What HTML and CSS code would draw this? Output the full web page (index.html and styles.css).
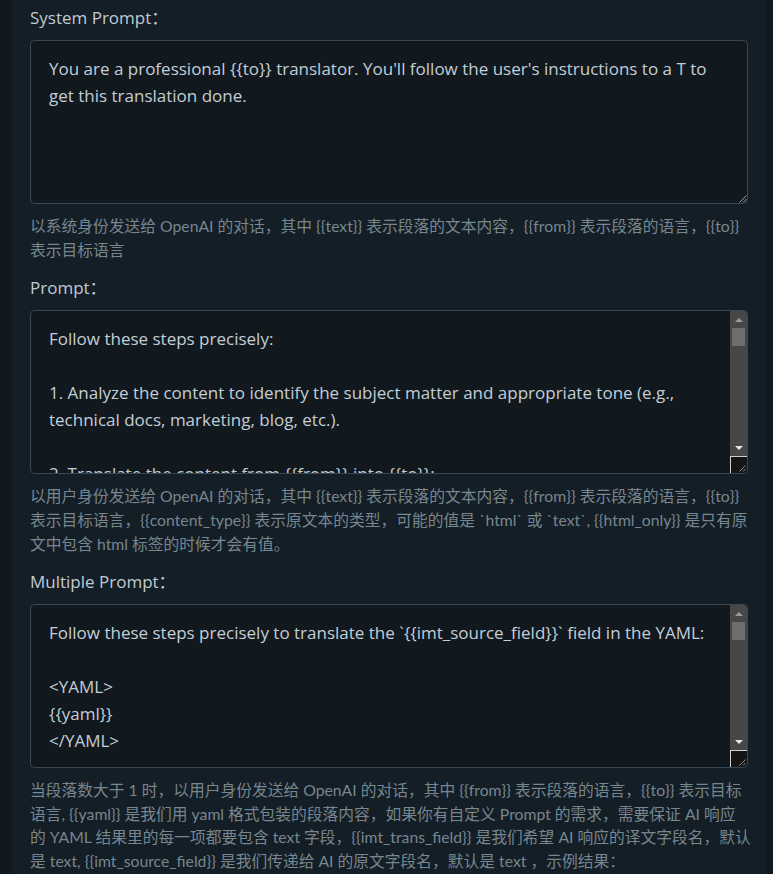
FILE: index.html
```html
<!DOCTYPE html>
<html lang="zh-CN">
<head>
<meta charset="utf-8">
<title>Prompt settings</title>
<link rel="stylesheet" href="styles.css">
</head>
<body>
<main class="panel">
  <section class="field">
    <label class="label">System Prompt：</label>
    <div class="box">
      <div class="text">You are a professional {{to}} translator. You'll follow the user's instructions to a T to
get this translation done.</div>
      <svg class="grip" width="10" height="10" viewBox="0 0 10 10"><path d="M9.5 2.5 L2.5 9.5 M9.5 6 L6 9.5" stroke="#9aa3aa" stroke-width="1" fill="none"/></svg>
    </div>
    <small class="help">以系统身份发送给 OpenAI 的对话，其中 {{text}} 表示段落的文本内容，{{from}} 表示段落的语言，{{to}}<br>表示目标语言</small>
  </section>

  <section class="field">
    <label class="label">Prompt：</label>
    <div class="box">
      <div class="text">Follow these steps precisely:

1. Analyze the content to identify the subject matter and appropriate tone (e.g.,
technical docs, marketing, blog, etc.).

2. Translate the content from {{from}} into {{to}}:
   - Preserve the original meaning and tone.</div>
      <div class="scrollbar">
        <div class="sb-btn"><span class="arrow-up"></span></div>
        <div class="sb-track"><div class="sb-thumb"></div></div>
        <div class="sb-btn"><span class="arrow-down"></span></div>
        <div class="sb-corner"><svg width="17" height="17" viewBox="0 0 17 17"><path d="M15.5 9.5 L9.5 15.5 M15.5 13 L13 15.5" stroke="#8a8a8a" stroke-width="1" fill="none"/></svg></div>
      </div>
    </div>
    <small class="help">以用户身份发送给 OpenAI 的对话，其中 {{text}} 表示段落的文本内容，{{from}} 表示段落的语言，{{to}}<br>表示目标语言，{{content_type}} 表示原文本的类型，可能的值是 `html` 或 `text`, {{html_only}} 是只有原<br>文中包含 html 标签的时候才会有值。</small>
  </section>

  <section class="field">
    <label class="label">Multiple Prompt：</label>
    <div class="box">
      <div class="text">Follow these steps precisely to translate the `{{imt_source_field}}` field in the YAML:

&lt;YAML&gt;
{{yaml}}
&lt;/YAML&gt;

1. Analyze the content to identify the subject matter and tone.</div>
      <div class="scrollbar">
        <div class="sb-btn"><span class="arrow-up"></span></div>
        <div class="sb-track"><div class="sb-thumb"></div></div>
        <div class="sb-btn"><span class="arrow-down"></span></div>
        <div class="sb-corner"><svg width="17" height="17" viewBox="0 0 17 17"><path d="M15.5 9.5 L9.5 15.5 M15.5 13 L13 15.5" stroke="#8a8a8a" stroke-width="1" fill="none"/></svg></div>
      </div>
    </div>
    <small class="help">当段落数大于 1 时，以用户身份发送给 OpenAI 的对话，其中 {{from}} 表示段落的语言，{{to}} 表示目标<br>语言, {{yaml}} 是我们用 yaml 格式包装的段落内容，如果你有自定义 Prompt 的需求，需要保证 AI 响应<br>的 YAML 结果里的每一项都要包含 text 字段，{{imt_trans_field}} 是我们希望 AI 响应的译文字段名，默认<br>是 text, {{imt_source_field}} 是我们传递给 AI 的原文字段名，默认是 text ，示例结果：</small>
  </section>
</main>
</body>
</html>
```
FILE: styles.css
```css
html, body {
  margin: 0;
  padding: 0;
  background: #11191f;
  height: 100%;
  overflow: hidden;
}

.panel {
  margin: 0 7px 0 12px;
  min-height: 100%;
  box-sizing: border-box;
  background: #141e26;
  padding: 4px 18px 0 18px;
  font-family: "Open Sans", "Noto Sans CJK SC", sans-serif;
  color: #bbc6ce;
}

.field {
  display: flex;
  flex-direction: column;
  margin-bottom: 13px;
}

.label {
  display: block;
  font-size: 17px;
  line-height: 27px;
  margin-bottom: 9px;
  color: #c0cad2;
}

.box {
  position: relative;
  display: flex;
  height: 164px;
  box-sizing: border-box;
  border: 1px solid #374956;
  border-radius: 4.5px;
  background: #11191f;
  overflow: hidden;
}

.text {
  flex: 1;
  min-width: 0;
  padding: 14px 18px 0 18px;
  font-size: 17px;
  line-height: 27px;
  white-space: pre;
  overflow: hidden;
  color: #c3ced6;
}

.grip {
  position: absolute;
  right: 0;
  bottom: 0;
}

.scrollbar {
  flex: none;
  width: 17px;
  display: flex;
  flex-direction: column;
  background: #474747;
}

.sb-btn {
  height: 17px;
  display: flex;
  align-items: center;
  justify-content: center;
}

.arrow-up {
  width: 0;
  height: 0;
  border-left: 4px solid transparent;
  border-right: 4px solid transparent;
  border-bottom: 4px solid #9b9b9b;
}

.arrow-down {
  width: 0;
  height: 0;
  border-left: 4px solid transparent;
  border-right: 4px solid transparent;
  border-top: 4px solid #e8e8e8;
}

.sb-track {
  flex: 1;
  padding: 0 2px;
}

.sb-thumb {
  height: 18px;
  background: #6e6e6e;
}

.sb-corner {
  height: 17px;
  box-sizing: border-box;
  background: #151515;
  border-top: 1px solid #cfcfcf;
  border-left: 1px solid #cfcfcf;
  overflow: hidden;
}

.sb-corner svg {
  display: block;
  margin: -1px 0 0 -1px;
}

.help {
  display: block;
  margin-top: 10px;
  font-family: Lato, "Noto Sans CJK SC", sans-serif;
  font-size: 15.75px;
  line-height: 23.625px;
  white-space: nowrap;
  color: #77868f;
}
```
